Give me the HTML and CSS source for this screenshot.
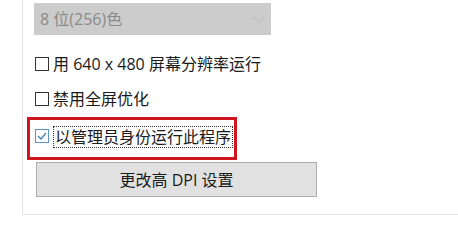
FILE: index.html
```html
<!DOCTYPE html>
<html lang="zh-CN">
<head>
<meta charset="utf-8">
<link rel="stylesheet" href="styles.css">
</head>
<body>
<div class="panel">
  <div class="select">
    <span class="select-text">8 位(256)色</span>
    <svg class="chevron" width="12" height="7" viewBox="0 0 12 7"><polyline points="0.5,0.5 6,6 11.5,0.5" fill="none" stroke="#b9b9b9" stroke-width="1"/></svg>
  </div>
  <div class="row row1"><span class="box"></span><span class="label">用 640 x 480 屏幕分辨率运行</span></div>
  <div class="row row2"><span class="box"></span><span class="label">禁用全屏优化</span></div>
  <div class="highlight">
    <div class="row row3">
      <span class="box checked"><svg width="12" height="12" viewBox="0 0 12 12"><polyline points="2,6 5,9 10,3" fill="none" stroke="#3f7fb3" stroke-width="1.3"/></svg></span>
      <span class="label focus">以管理员身份运行此程序</span>
    </div>
  </div>
  <div class="button">更改高 DPI 设置</div>
</div>
</body>
</html>
```
FILE: styles.css
```css
html, body {
  margin: 0;
  padding: 0;
  background: #ffffff;
}
body {
  font-family: "Open Sans", "Noto Sans CJK SC", sans-serif;
  font-size: 16px;
  color: #1a1a1a;
  width: 458px;
  height: 227px;
  overflow: hidden;
}
.panel {
  margin-left: 22px;
  width: 425px;
  border-left: 1px solid #e4e4e4;
  border-bottom: 1px solid #e4e4e4;
  padding: 3px 0 17px 11px;
}
.select {
  width: 237px;
  height: 32px;
  box-sizing: border-box;
  background: #cccccc;
  display: flex;
  align-items: center;
  justify-content: space-between;
  padding: 0 6px 0 6px;
  color: #8a8a8a;
  line-height: 20px;
}
.chevron {
  margin-top: 1px;
}
.row {
  display: flex;
  align-items: center;
  height: 20px;
  line-height: 20px;
  white-space: nowrap;
}
.row1 {
  margin-top: 19px;
  padding-left: 1px;
}
.row2 {
  margin-top: 15px;
  padding-left: 1px;
}
.box {
  width: 14px;
  height: 14px;
  box-sizing: border-box;
  border: 1px solid #333333;
  background: #ffffff;
  margin-right: 4px;
  display: flex;
  align-items: center;
  justify-content: center;
}
.box.checked {
  border-color: #5d93c2;
}
.highlight {
  margin-top: 8px;
  margin-left: -7px;
  width: 210px;
  height: 43px;
  box-sizing: border-box;
  border: 3px solid #cf1620;
  padding: 7px 0 0 5px;
}
.row3 .box {
  margin-right: 6px;
  margin-top: -2px;
}
.label.focus {
  outline: 1px dotted #333333;
  padding: 0 1px;
  margin-left: -1px;
}
.button {
  margin-top: 2px;
  margin-left: 2px;
  width: 281px;
  height: 35px;
  box-sizing: border-box;
  background: #e1e1e1;
  border: 1px solid #adadad;
  display: flex;
  align-items: center;
  justify-content: center;
  color: #1a1a1a;
  line-height: 20px;
}
```
